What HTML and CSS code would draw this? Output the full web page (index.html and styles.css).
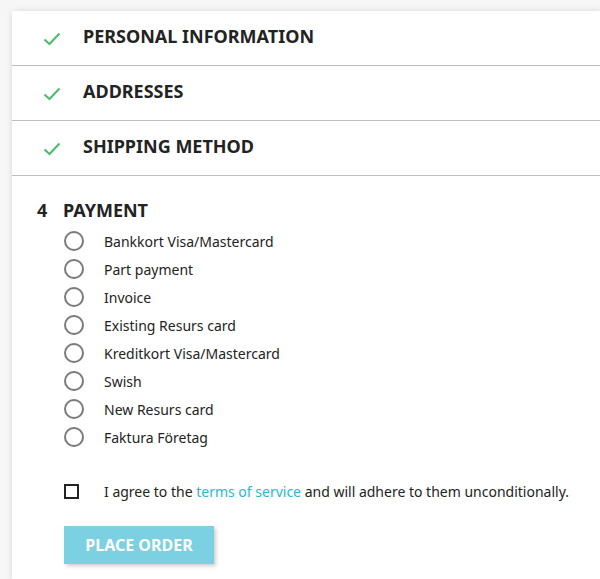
FILE: index.html
```html
<!DOCTYPE html>
<html>
<head>
<meta charset="utf-8">
<link rel="stylesheet" href="styles.css">
</head>
<body>
<div class="page">
  <div class="card">
    <div class="step done">
      <svg class="check" width="18" height="14" viewBox="0 0 18 14"><path d="M1.5 7.5 L6.5 12 L16.5 1.5" fill="none" stroke="#4cbb6c" stroke-width="2"/></svg>
      <span class="step-title">Personal Information</span>
    </div>
    <div class="step done">
      <svg class="check" width="18" height="14" viewBox="0 0 18 14"><path d="M1.5 7.5 L6.5 12 L16.5 1.5" fill="none" stroke="#4cbb6c" stroke-width="2"/></svg>
      <span class="step-title">Addresses</span>
    </div>
    <div class="step done">
      <svg class="check" width="18" height="14" viewBox="0 0 18 14"><path d="M1.5 7.5 L6.5 12 L16.5 1.5" fill="none" stroke="#4cbb6c" stroke-width="2"/></svg>
      <span class="step-title">Shipping Method</span>
    </div>
    <div class="current">
      <div class="current-head"><span class="num">4</span><span class="step-title">Payment</span></div>
      <ul class="options">
        <li class="option"><span class="radio"></span><span>Bankkort Visa/Mastercard</span></li>
        <li class="option"><span class="radio"></span><span>Part payment</span></li>
        <li class="option"><span class="radio"></span><span>Invoice</span></li>
        <li class="option"><span class="radio"></span><span>Existing Resurs card</span></li>
        <li class="option"><span class="radio"></span><span>Kreditkort Visa/Mastercard</span></li>
        <li class="option"><span class="radio"></span><span>Swish</span></li>
        <li class="option"><span class="radio"></span><span>New Resurs card</span></li>
        <li class="option"><span class="radio"></span><span>Faktura Företag</span></li>
      </ul>
      <div class="agree"><span class="box"></span><span>I agree to the <a href="#">terms of service</a> and will adhere to them unconditionally.</span></div>
      <button class="order">Place Order</button>
    </div>
  </div>
</div>
</body>
</html>
```
FILE: styles.css
```css
html, body { margin: 0; padding: 0; }
body {
  background: #f6f6f6;
  font-family: "Noto Sans", sans-serif;
  color: #232323;
  overflow: hidden;
  width: 600px;
  height: 579px;
}
.page { padding: 11px 0 0 12px; }
.card {
  background: #fff;
  width: 588px;
  height: 568px;
  box-shadow: 2px 2px 8px 0 rgba(0,0,0,0.2);
}
.step {
  height: 50px;
  padding-bottom: 4px;
  border-bottom: 1px solid #bcbcbc;
  display: flex;
  align-items: center;
  padding-left: 31px;
}
.check { margin-right: 22px; margin-top: 5px; }
.step-title {
  font-weight: 700;
  font-size: 18px;
  text-transform: uppercase;
}
.current { padding: 22px 0 0 25px; }
.current-head { display: flex; align-items: center; height: 24px; }
.num { font-weight: 700; font-size: 18px; width: 26px; }
.options { list-style: none; margin: 5px 0 0 0; padding: 0 0 0 27px; }
.option {
  display: flex;
  align-items: center;
  height: 28px;
  font-size: 14px;
}
.radio {
  width: 16px;
  height: 16px;
  border: 2px solid #7a7a7a;
  border-radius: 50%;
  margin-right: 20px;
  flex: none;
}
.agree {
  display: flex;
  align-items: center;
  margin: 26px 0 0 27px;
  font-size: 14px;
  height: 28px;
}
.box {
  width: 11px;
  height: 11px;
  border: 2px solid #232323;
  margin-right: 25px;
  flex: none;
}
.agree a { color: #24b9d7; text-decoration: none; }
.order {
  display: block;
  margin: 21px 0 0 27px;
  width: 150px;
  height: 38px;
  border: none;
  background: #7bd0e1;
  color: #fff;
  font-family: "Noto Sans", sans-serif;
  font-weight: 700;
  font-size: 16px;
  text-transform: uppercase;
  box-shadow: 2px 2px 4px 0 rgba(0,0,0,0.2);
  padding: 0;
}
```
